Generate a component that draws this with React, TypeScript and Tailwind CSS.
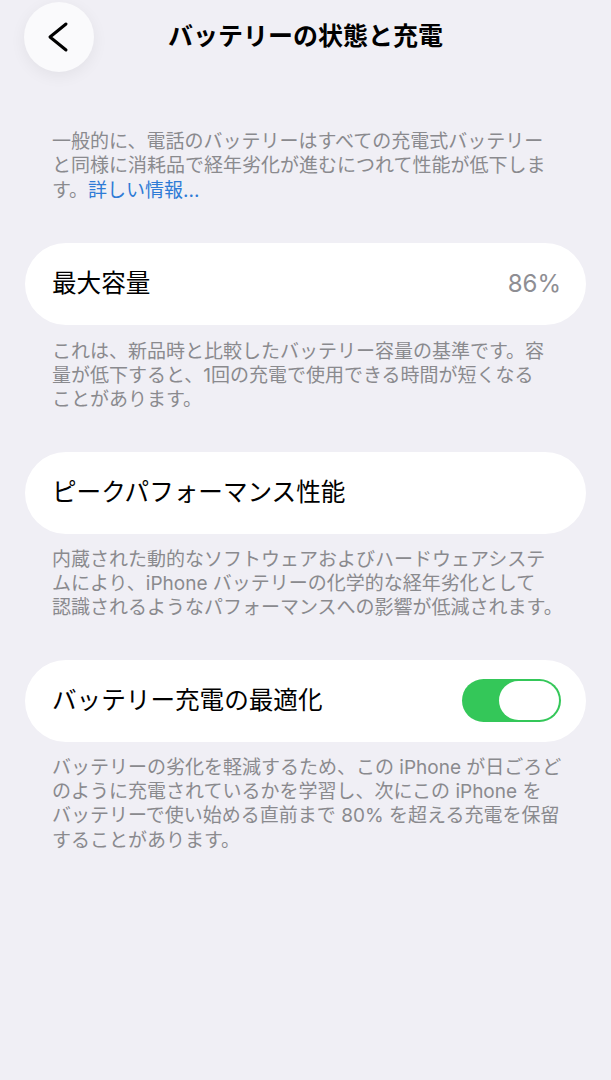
const font = "font-['Inter','Noto_Sans_CJK_JP',sans-serif]";

const Lines = ({ lines, className }: { lines: React.ReactNode[]; className?: string }) => (
    <div className={`px-[27px] text-[19px] leading-[24.3px] text-[#8a8a8e] ${className ?? ""}`}>
        {lines.map((line, i) => (
            <div key={i} className="whitespace-nowrap">
                {line}
            </div>
        ))}
    </div>
);

const Card = ({ title, children }: { title: string; children?: React.ReactNode }) => (
    <div className="flex h-[82px] items-center justify-between rounded-full bg-white pl-[27px] pr-[25px]">
        <span className="text-[24.6px] text-black">{title}</span>
        {children}
    </div>
);

const Toggle = () => (
    <div className="flex h-[43px] w-[99px] items-center justify-end rounded-full bg-[#34c759] p-[2px]">
        <div className="h-[39px] w-[60px] rounded-full bg-white" />
    </div>
);

const BackChevron = () => (
    <svg width="22" height="32" viewBox="0 0 22 32" fill="none">
        <polyline
            points="19,3 3,16 19,29"
            stroke="#000"
            strokeWidth="3"
            strokeLinecap="round"
            strokeLinejoin="round"
        />
    </svg>
);

export default function App() {
    return (
        <div className={`min-h-[1080px] w-full bg-[#f0eff5] ${font}`}>
            <header className="grid grid-cols-[70px_1fr_70px] items-center px-[24px] pt-[2px]">
                <button className="flex h-[70px] w-[70px] items-center justify-center rounded-full bg-[#fafafc] pr-[2px] shadow-[0_4px_16px_rgba(0,0,0,0.06)]">
                    <BackChevron />
                </button>
                <h1 className="text-center text-[25px] font-bold text-black">バッテリーの状態と充電</h1>
                <div />
            </header>

            <main className="px-[25px]">
                <Lines
                    className="mt-[58px]"
                    lines={[
                        "一般的に、電話のバッテリーはすべての充電式バッテリー",
                        "と同様に消耗品で経年劣化が進むにつれて性能が低下しま",
                        <>
                            す。<span className="text-[#2e7bd6]">詳しい情報...</span>
                        </>,
                    ]}
                />

                <div className="mt-[40px]">
                    <Card title="最大容量">
                        <span className="text-[24px] text-[#8e8e93]">86%</span>
                    </Card>
                </div>
                <Lines
                    className="mt-[15px]"
                    lines={[
                        "これは、新品時と比較したバッテリー容量の基準です。容",
                        "量が低下すると、1回の充電で使用できる時間が短くなる",
                        "ことがあります。",
                    ]}
                />

                <div className="mt-[39px]">
                    <Card title="ピークパフォーマンス性能" />
                </div>
                <Lines
                    className="mt-[14px]"
                    lines={[
                        "内蔵された動的なソフトウェアおよびハードウェアシステ",
                        "ムにより、iPhone バッテリーの化学的な経年劣化として",
                        "認識されるようなパフォーマンスへの影響が低減されます。",
                    ]}
                />

                <div className="mt-[39px]">
                    <Card title="バッテリー充電の最適化">
                        <Toggle />
                    </Card>
                </div>
                <Lines
                    className="mt-[14px]"
                    lines={[
                        "バッテリーの劣化を軽減するため、この iPhone が日ごろど",
                        "のように充電されているかを学習し、次にこの iPhone を",
                        "バッテリーで使い始める直前まで 80% を超える充電を保留",
                        "することがあります。",
                    ]}
                />
            </main>
        </div>
    );
}
